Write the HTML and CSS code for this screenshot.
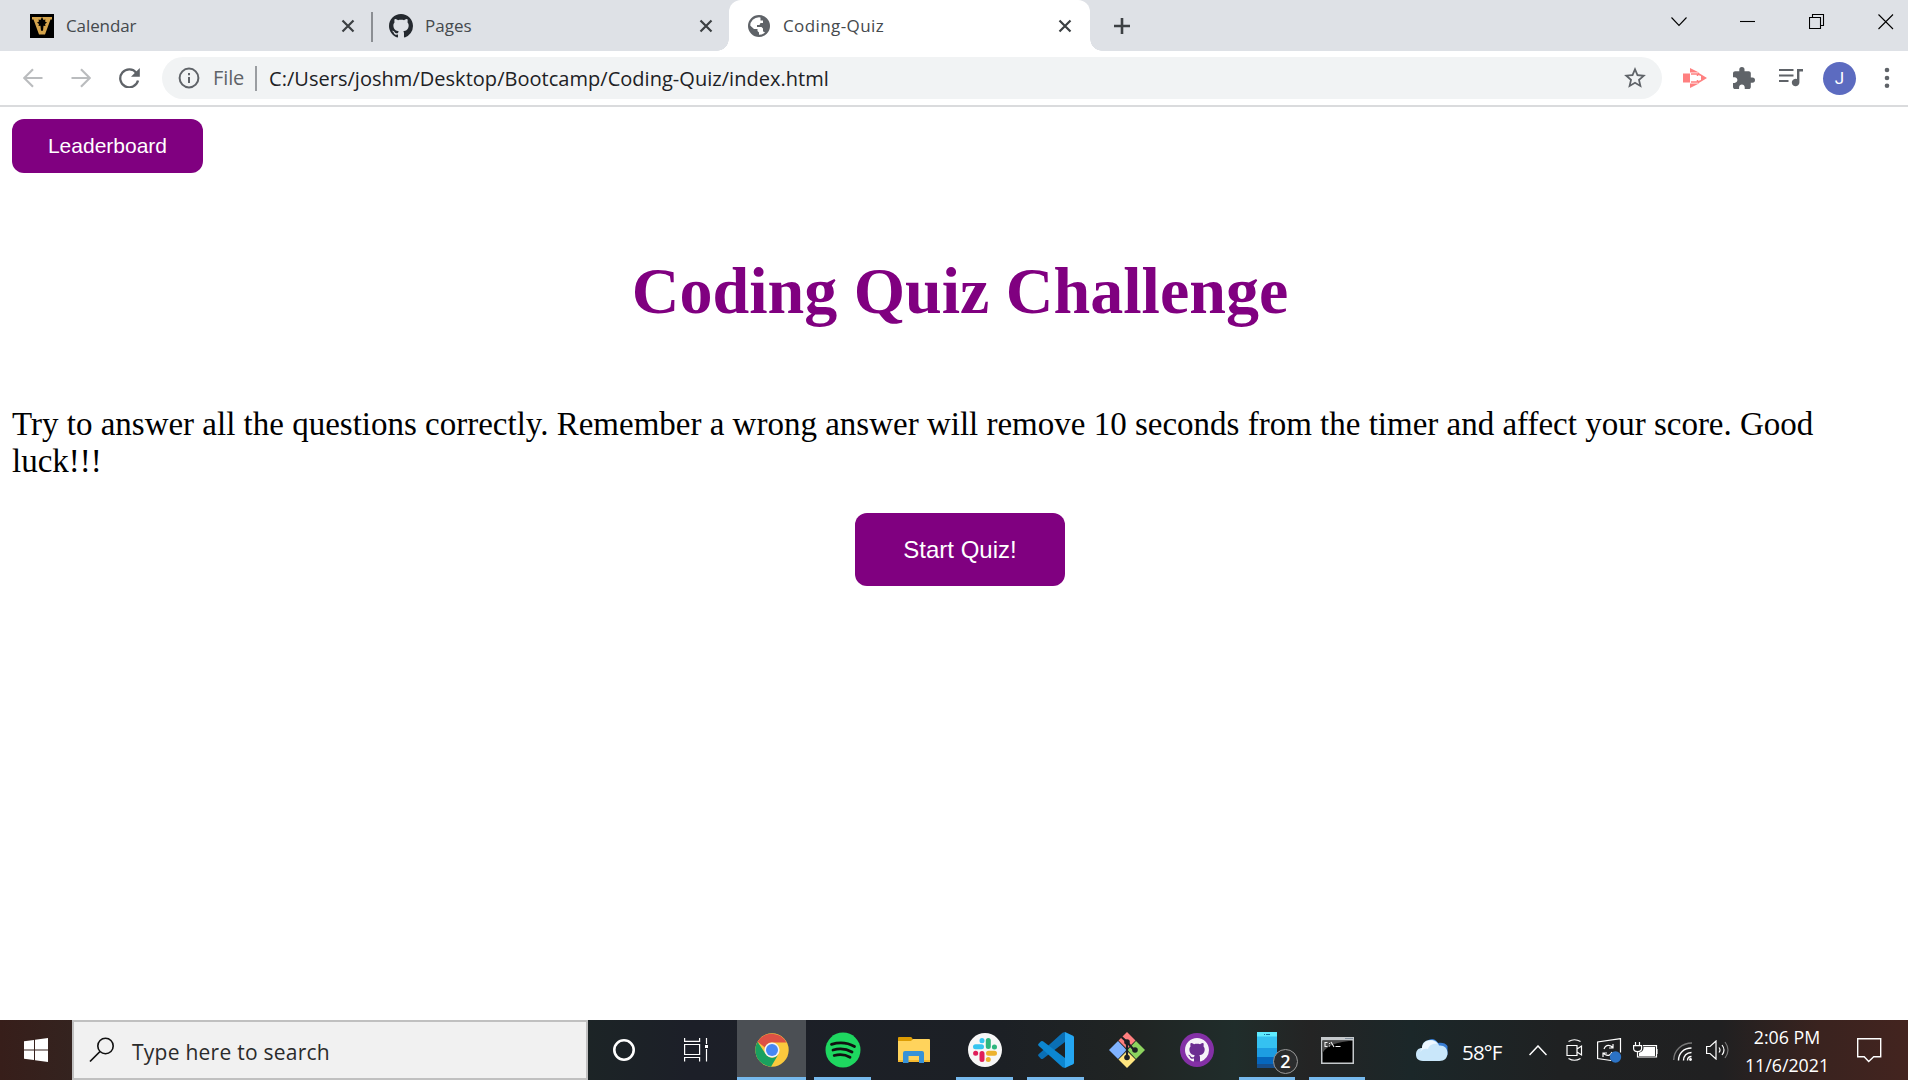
FILE: index.html
```html
<!DOCTYPE html>
<html lang="en">
<head>
<meta charset="utf-8">
<title>Coding-Quiz</title>
<link rel="stylesheet" href="styles.css">
</head>
<body>
<div class="screen">
  <header class="tabs">
    <div class="tab tab-first">
      <svg class="fav" width="24" height="24" viewBox="0 0 24 24"><path fill="#000" d="M0 0h24v24H0z"/><path fill="#d5a44c" d="M2 3h20v2.500h-1.500L15 20.500H9L3.500 5.500H2z"/><path fill="#000" d="M12 3l1.500 3 2-.5-.5 2 2 1-2 1.500.5 2-2-.3-.5 5h-2l-.5-5-2 .3.500-2-2-1.500 2-1-.5-2 2 .5z"/></svg>
      <span class="tab-title calendar">Calendar</span>
      <svg class="close" width="14" height="14" viewBox="0 0 14 14"><path d="M1.500 1.500l11 11M12.500 1.500l-11 11"/></svg>
    </div>
    <div class="tab tab-second">
      <svg class="fav" width="24" height="24" viewBox="0 0 16 16"><path fill="#24292f" d="M8 0C3.580 0 0 3.580 0 8c0 3.540 2.290 6.530 5.470 7.590.4.070.55-.17.55-.38 0-.19-.01-.82-.01-1.490-2.010.37-2.530-.49-2.690-.94-.09-.23-.48-.94-.82-1.130-.28-.15-.68-.52-.01-.53.63-.01 1.080.58 1.230.82.72 1.210 1.870.87 2.330.66.070-.52.280-.87.510-1.070-1.780-.2-3.640-.89-3.640-3.950 0-.87.310-1.590.82-2.150-.08-.2-.36-1.020.080-2.120 0 0 .67-.21 2.200.82.640-.18 1.320-.27 2-.27s1.360.090 2 .27c1.530-1.040 2.200-.82 2.200-.82.440 1.100.160 1.920.080 2.120.510.560.82 1.270.82 2.150 0 3.070-1.870 3.750-3.650 3.950.290.250.540.730.540 1.480 0 1.070-.01 1.930-.01 2.200 0 .210.150.460.550.380A8.010 8.010 0 0 0 16 8c0-4.420-3.580-8-8-8z"/></svg>
      <span class="tab-title pages">Pages</span>
      <svg class="close" width="14" height="14" viewBox="0 0 14 14"><path d="M1.500 1.500l11 11M12.500 1.500l-11 11"/></svg>
    </div>
    <div class="tab tab-active">
      <svg class="fav" width="22" height="22" viewBox="0 0 22 22"><circle cx="11" cy="11" r="9.900" fill="#fff" stroke="#5f6368" stroke-width="2.200"/><path fill="#5f6368" d="M12.500 1c5 1 8.500 5 8.500 10 0 3-1.500 6-3.500 7.500-.5-1-1-2-2.500-2v-3l-1.500-1.500H9V10h2.500l1-2H15V5.500h-2.500zM1 9.500l5 4.500h3.500v2l1.500 1.500V21C5 21 .5 16 1 9.500z"/></svg>
      <span class="tab-title quiz">Coding-Quiz</span>
      <svg class="close" width="14" height="14" viewBox="0 0 14 14"><path d="M1.500 1.500l11 11M12.500 1.500l-11 11"/></svg>
    </div>
    <svg class="plus" width="18" height="18" viewBox="0 0 18 18"><path d="M9 1v16M1 9h16"/></svg>
    <div class="window-controls">
      <svg width="16" height="16" viewBox="0 0 16 16"><path d="M.5 3.500L8 11.500l7.500-8"/></svg>
      <svg width="16" height="16" viewBox="0 0 16 16"><path d="M0 7.500h15"/></svg>
      <svg width="16" height="16" viewBox="0 0 16 16"><path d="M.5 3.500h11v11H.5zM3.500 3.500v-3h11v11h-3"/></svg>
      <svg width="16" height="16" viewBox="0 0 16 16"><path d="M.5.5l14.500 14.500M15 .5L.5 15"/></svg>
    </div>
  </header>

  <nav class="toolbar">
    <svg class="arrow back" width="20" height="20" viewBox="0 0 20 20"><path d="M19.500 10H1.500M10 1.200L1.200 10l8.800 8.800"/></svg>
    <svg class="arrow forward" width="20" height="20" viewBox="0 0 20 20"><path d="M.5 10h18M10 1.200l8.800 8.800-8.800 8.800"/></svg>
    <svg class="reload" width="21" height="20" viewBox="0 0 21 20"><path d="M17.500 5A9 9 0 1 0 19 12.500" fill="none" stroke="#5f6368" stroke-width="2.300"/><path d="M20.800 0v8.800H12z" fill="#5f6368"/></svg>
    <div class="omnibox">
      <svg class="info" width="22" height="22" viewBox="0 0 22 22"><circle cx="11" cy="11" r="9.400" fill="none" stroke="#5f6368" stroke-width="2"/><path d="M10 10h2v6h-2zM10 6h2v2.200h-2z" fill="#5f6368"/></svg>
      <span class="scheme">File</span>
      <span class="url">C:/Users/joshm/Desktop/Bootcamp/Coding-Quiz/index.html</span>
      <svg class="star" width="24" height="24" viewBox="1 1 22 22"><path fill="#5f6368" d="M22 9.240l-7.190-.62L12 2 9.190 8.630 2 9.240l5.460 4.730L5.820 21 12 17.270 18.180 21l-1.630-7.030L22 9.240zM12 15.400l-3.760 2.270 1-4.280-3.320-2.880 4.380-.38L12 6.100l1.710 4.040 4.380.38-3.320 2.880 1 4.280L12 15.400z"/></svg>
    </div>
    <svg class="recorder" width="24" height="20" viewBox="0 0 24 20"><path fill="#ff8080" d="M0 5.500h7v9H0zM7 0l9 4.500H7zM7 20l9-4.500H7zM15 4.500l9 5.500-9 5.500v-2.500l3-1v-4l-3-1z"/><path d="M8 6h6.500v2M8 14h6.500v-2" fill="none" stroke="#ff8080" stroke-width="1.500"/></svg>
    <svg class="puzzle" width="22" height="22" viewBox="2 1 21 21"><path fill="#5f6368" d="M20.500 11H19V7c0-1.100-.9-2-2-2h-4V3.500a2.500 2.500 0 0 0-5 0V5H4c-1.100 0-1.990.9-1.990 2v3.800H3.500c1.490 0 2.700 1.210 2.700 2.700s-1.210 2.700-2.700 2.700H2V20c0 1.100.9 2 2 2h3.800v-1.500c0-1.490 1.210-2.700 2.700-2.700s2.700 1.210 2.700 2.700V22H17c1.100 0 2-.9 2-2v-4h1.500a2.500 2.500 0 0 0 0-5z"/></svg>
    <svg class="playlist" width="25" height="20" viewBox="0 0 25 20"><path fill="none" stroke="#5f6368" stroke-width="2.200" d="M0 2h14.500M0 7.500h14.500M0 13h9.500"/><path fill="#5f6368" d="M18 1h6v2.400h-3.600v11.100a3.800 3.800 0 1 1-2.400-3.500z"/></svg>
    <span class="avatar">J</span>
    <svg class="dots" width="6" height="22" viewBox="0 0 6 22"><g fill="#5f6368"><circle cx="3" cy="3" r="2.300"/><circle cx="3" cy="11" r="2.300"/><circle cx="3" cy="18.700" r="2.300"/></g></svg>
  </nav>

  <main class="page">
    <button class="btn leaderboard">Leaderboard</button>
    <h1 class="heading">Coding Quiz Challenge</h1>
    <p class="intro">Try to answer all the questions correctly. Remember a wrong answer will remove 10 seconds from the timer and affect your score. Good luck!!!</p>
    <button class="btn start">Start Quiz!</button>
  </main>

  <footer class="taskbar">
    <div class="win">
      <svg width="24" height="24" viewBox="0 0 24 24"><path fill="#fff" d="M0 3.300L10 2v9.500H0zM11 1.800L24 0v11.500H11zM0 12.500h10V22L0 20.700zM11 12.500h13V24l-13-1.800z"/></svg>
    </div>
    <div class="search">
      <svg width="26" height="26" viewBox="0 0 26 26"><circle cx="16.500" cy="9" r="7.700" fill="none" stroke="#111" stroke-width="1.600"/><path d="M11 14.500L1 24.500" stroke="#111" stroke-width="1.700"/></svg>
      <span>Type here to search</span>
    </div>
    <div class="apps">
      <div class="app"><svg width="24" height="24" viewBox="0 0 24 24"><circle cx="12" cy="12" r="9.700" fill="none" stroke="#fff" stroke-width="2.600"/></svg></div>
      <div class="app"><svg width="24" height="24" viewBox="0 0 24 24"><path fill="none" stroke="#fff" stroke-width="1.200" d="M.6 0v3.400h15V0M.6 6.500h15v10H.6zM.6 23.500v-4h15v4M22.500 0v6M22.500 11v12.500"/><path fill="#fff" d="M21 7h3v3h-3z"/></svg></div>
      <div class="app open current"><svg width="34" height="34" viewBox="0 0 34 34"><circle cx="17" cy="17" r="16.700" fill="#fbc93d"/><path fill="#dd5144" d="M2.500 8.700A16.700 16.700 0 0 1 31.500 9.500H17a7.500 7.500 0 0 0-7 5z"/><path fill="#1aa15f" d="M2.500 8.700A16.700 16.700 0 0 0 16 33.700l7.300-12.300A7.500 7.500 0 0 1 10.500 20.700z"/><circle cx="17" cy="17" r="7.600" fill="#f4f4f4"/><circle cx="17" cy="17" r="6" fill="#4687f4"/></svg></div>
      <div class="app open"><svg width="36" height="36" viewBox="0 0 36 36"><circle cx="18" cy="18" r="17.500" fill="#1ed760"/><path d="M6.500 12.300c8-2.300 16.500-1.500 23 2.200M8 18c6.800-2 13.500-1.200 19 2M9.200 23.500c5.700-1.500 11-1 15.800 1.700" fill="none" stroke="#111" stroke-linecap="round" stroke-width="2.800"/></svg></div>
      <div class="app"><svg width="32" height="28" viewBox="0 0 32 28"><path fill="#dd9c03" d="M0 2q0-1 1-1h12q1 0 2 3v3H0z"/><path fill="#ffd35c" d="M0 5h13l2-2h16q1 0 1 1v22H0z"/><path fill="#f5b92f" d="M0 24h32v2H0z"/><path fill="#3792d8" d="M5 27V17q0-2 2-2h17q2 0 2 2v10h-5v-7H10.500v7z"/></svg></div>
      <div class="app open"><svg width="34" height="34" viewBox="0 0 34 34"><circle cx="17" cy="17" r="17" fill="#f7f7f7"/><g fill="none" stroke-width="5" stroke-linecap="round"><path stroke="#36c5f0" d="M7.500 13.700h6M14 7.600v.1"/><path stroke="#2eb67d" d="M20.300 7.500v6M26.500 14h-.1"/><path stroke="#ecb22e" d="M20.500 20.300h6M20.300 26.500v-.1"/><path stroke="#e01e5a" d="M14 20.500v6M7.600 20.300h.1"/></g></svg></div>
      <div class="app open"><svg width="36" height="36" viewBox="0 0 36 36"><path fill="#0a6fb5" d="M.6 24.300q-1-1 0-2L24.500.8 27 0v10L5 26.700q-1.300.8-2.300-.2z"/><path fill="#0c86d0" d="M.6 11.700q-1 1 0 2L24.500 35.200 27 36V26L5 9.300q-1.300-.8-2.300.2z"/><path fill="#24a6f2" d="M27 0l8 3.700q1 .5 1 1.600v25.400q0 1.100-1 1.600L27 36z"/></svg></div>
      <div class="app"><svg width="36" height="36" viewBox="0 0 36 36"><path fill="#ff7f7f" d="M18 0l8.500 8.500L18 17 9.500 8.500z"/><path fill="#80b3ff" d="M9 9l8.500 9L9 27l-9-9z"/><path fill="#8dd35f" d="M27 9l9 9-9 9-8.500-9z"/><path fill="#ffe680" d="M18 19l8.500 8.500L18 36l-8.500-8.500z"/><path d="M12.500 5l5.500 5v15M18 10l7 8" stroke="#1c1f24" stroke-width="2.200" fill="none"/><g fill="#1c1f24"><circle cx="18" cy="10" r="2.800"/><circle cx="26" cy="18" r="2.800"/><circle cx="18" cy="25.500" r="2.800"/></g></svg></div>
      <div class="app"><svg width="34" height="34" viewBox="0 0 34 34"><circle cx="17" cy="17" r="17" fill="#8430a6"/><circle cx="17" cy="17" r="11.500" fill="#6b2c91"/><path transform="translate(5 5) scale(1.500)" fill="#f6f2f8" d="M8 0C3.580 0 0 3.580 0 8c0 3.540 2.290 6.530 5.470 7.590.4.070.55-.17.55-.38 0-.19-.01-.82-.01-1.490-2.010.37-2.530-.49-2.690-.94-.09-.23-.48-.94-.82-1.130-.28-.15-.68-.52-.01-.53.63-.01 1.080.58 1.230.82.72 1.210 1.870.87 2.330.66.070-.52.280-.87.510-1.070-1.780-.2-3.640-.89-3.640-3.950 0-.87.310-1.590.82-2.150-.08-.2-.36-1.020.080-2.120 0 0 .67-.21 2.200.82.640-.18 1.320-.27 2-.27s1.360.090 2 .27c1.530-1.040 2.200-.82 2.200-.82.440 1.100.160 1.920.080 2.120.510.560.82 1.270.82 2.150 0 3.070-1.870 3.750-3.650 3.950.290.250.540.730.540 1.480 0 1.070-.01 1.930-.01 2.200 0 .210.150.460.550.380A8.010 8.010 0 0 0 16 8c0-4.420-3.580-8-8-8z"/></svg></div>
      <div class="app open phone"><svg width="20" height="36" viewBox="0 0 20 36"><path fill="#35c1f1" d="M0 0h20v36H0z"/><path fill="#5eebff" d="M0 0h20v4.500H0z"/><path fill="#1d9de2" d="M0 16h20v9H0z"/><path fill="#0667bd" d="M0 25h20v7H0z"/><path fill="#174f8c" d="M0 32h20v4H0z"/><path stroke="#1670a0" d="M7 2.500h1M9 2.500h4"/></svg><span class="badge">2</span></div>
      <div class="app open"><svg class="terminal" width="33" height="27" viewBox="0 0 33 27"><path fill="#c5c9cc" d="M0 0h33v27H0z"/><path fill="#83919e" d="M24 1h8v1h-8z"/><path fill="#000" d="M1.500 3.500h30v22h-30z"/><path fill="#4b4b4b" d="M1.500 3.500h30C17 5 6 8 1.500 16z"/><path fill="none" stroke="#eee" stroke-width="1.100" d="M6.500 5.500H4v4h2.500M8.500 6v1M8.500 8.500v1M10 5l3 5M14.500 9.500h5"/></svg></div>
    </div>
    <div class="tray">
      <svg class="cloud" width="32" height="22" viewBox="0 0 32 22"><path fill="#387ed5" d="M10 3C14-1 19-1 22 4c3-1 8 0 9.500 3v9L22 18z"/><path fill="#c9e7fa" d="M7 22C1 22 0 18 0 15.500 0 11 3 9 6 9 6 4 9 1 14.500 1 19 1 22 3 23 6.500c5-.5 8.500 2.500 8.500 7.500s-3 8-8 8z"/><path fill="#eef8ff" d="M6 9C7 4 10 1.500 14.500 1.500 18 1.500 20 3 21 5c-5-1-8 2-9 5-3-1-6 0-8 3z"/></svg>
      <span class="temp">58°F</span>
      <svg class="up" width="18" height="11" viewBox="0 0 18 11"><path d="M.5 10L9 1l8.500 9"/></svg>
      <svg class="meet" width="17" height="24" viewBox="0 0 17 24"><path d="M1 7.500h10v10H1zM11 11l4.500-3v9L11 14M2.500 3.500q6-3.500 12 0M2.500 20.500q6 3.500 12 0"/></svg>
      <svg class="sync" width="25" height="25" viewBox="0 0 25 25"><path d="M14 22.500L.6 20.500V4L23.500.6v14M7 11q2-5 7-3l2 2M16 6v4h-4M15 14q-2 5-7 2.500L6 15M6 19v-4h4"/><circle cx="18.500" cy="19" r="5.700" fill="#2b72c4" stroke="none"/></svg>
      <svg class="battery" width="25" height="18" viewBox="0 0 25 18"><path d="M2.500 1v3M6.500 1v3M.6 4.600h8v3q0 3-4 3t-4-3zM4.500 11v5h19V4.600H10M24 8v5"/><path fill="#fff" stroke="none" d="M10.500 6H22v9H6v-3.300q4.500-1 4.500-5z"/></svg>
      <svg class="wifi" width="20" height="20" viewBox="0 0 20 20"><path stroke="#777" d="M.7 18C1 8 9 1 19 1"/><path d="M5.500 18.500C5.500 11 11 6 18.500 6M10.500 18.500c0-4.500 3-8 8-8M14.500 18.500q0-4 4-4"/><circle cx="17.500" cy="17.500" r="1.400" fill="#fff" stroke="none"/></svg>
      <svg class="volume" width="23" height="20" viewBox="0 0 23 20"><path d="M.6 6.500H4L10 1v18l-6-5.500H.6zM13 7.500q2 2.500 0 5M16 5q4 5 0 10"/><path stroke="#777" d="M19 2q6 8 0 16"/></svg>
      <div class="clock"><span class="time">2:06 PM</span><span class="date">11/6/2021</span></div>
      <svg class="notice" width="25" height="25" viewBox="0 0 25 25"><path d="M.7.7h23v18h-7l-5 4.800-4.500-4.800H.7z"/></svg>
    </div>
  </footer>
</div>
</body>
</html>
```

FILE: styles.css
```css
* { box-sizing: border-box; }
body { margin: 0; background: #fff; }
svg { display: block; flex: none; }
span { white-space: nowrap; }

.screen {
  width: 1908px;
  height: 1080px;
  display: flex;
  flex-direction: column;
  overflow: hidden;
  font-family: "Open Sans", "Noto Sans", sans-serif;
}

/* Tab strip */
.tabs { height: 51px; flex: none; display: flex; background: #dee1e6; }
.tab { display: flex; align-items: center; height: 51px; }
.tab-first { width: 373px; padding: 0 18px 0 30px; background: linear-gradient(#8b8e93, #8b8e93) right 12px / 2px 30px no-repeat; }
.tab-second { width: 356px; padding: 0 16px 0 16px; }
.tab-active {
  position: relative;
  width: 361px;
  padding: 0 18px 0 19px;
  background: #fff;
  border-radius: 12px 12px 0 0;
}
.tab-active::before, .tab-active::after {
  content: "";
  position: absolute;
  bottom: 0;
  width: 12px;
  height: 12px;
}
.tab-active::before { left: -12px; background: radial-gradient(circle at 0 0, transparent 11.5px, #fff 12px); }
.tab-active::after { right: -12px; background: radial-gradient(circle at 100% 0, transparent 11.5px, #fff 12px); }
.tab-title { flex: 1; margin-left: 12px; font-size: 17px; color: #45494d; }
.calendar { letter-spacing: -0.1px; }
.pages { letter-spacing: 0; }
.quiz { margin-left: 13px; letter-spacing: 0.4px; }
.close { fill: none; stroke: #3c4043; stroke-width: 2.2; }
.plus { margin: 17px 0 0 23px; fill: none; stroke: #3c4043; stroke-width: 2.6; }
.window-controls { display: flex; gap: 53px; margin: 14px 14px 0 auto; fill: none; stroke: #000; stroke-width: 1.1; }

/* Toolbar */
.toolbar {
  height: 56px;
  flex: none;
  display: flex;
  align-items: center;
  padding-left: 23px;
  border-bottom: 2px solid #dadbdd;
}
.arrow { fill: none; stroke: #babcbe; stroke-width: 2.2; }
.forward { margin-left: 28px; }
.reload { margin-left: 28px; }
.omnibox {
  width: 1500px;
  height: 42px;
  margin-left: 22px;
  padding: 0 15px 0 16px;
  display: flex;
  align-items: center;
  border-radius: 21px;
  background: #f1f3f4;
  font-size: 20px;
}
.scheme { width: 44px; height: 25px; line-height: 24px; margin-left: 13px; border-right: 2px solid #9a9da1; color: #5f6368; letter-spacing: -0.1px; }
.url { flex: 1; margin-left: 12px; color: #202124; letter-spacing: 0.03px; }
.recorder { margin-left: 21px; }
.puzzle { margin-left: 26px; }
.playlist { margin-left: 24px; }
.avatar {
  width: 33px;
  height: 33px;
  flex: none;
  margin-left: 19px;
  border-radius: 50%;
  background: #5c6bc0;
  color: #fff;
  font: 17px/33px Roboto, sans-serif;
  text-align: center;
}
.dots { margin-left: 28px; }

/* Quiz page */
.page {
  flex: 1;
  display: flex;
  flex-direction: column;
  align-items: center;
  padding: 12px 0 0 12px;
  font-family: "Liberation Serif", "Times New Roman", serif;
}
.btn { border: 0; border-radius: 12px; background: #800080; color: #fff; font-family: "Liberation Sans", Arial, sans-serif; }
.leaderboard { align-self: flex-start; width: 191px; height: 54px; padding: 0; font-size: 21px; }
.heading { margin: 80px 0 0; font-size: 66px; line-height: 76px; font-weight: bold; color: #800080; }
.intro { align-self: stretch; margin: 77px 0 0; font-size: 33px; line-height: 37px; color: #000; }
.start { width: 210px; height: 73px; margin-top: 33px; padding: 0; font-size: 24px; }

/* Taskbar */
.taskbar {
  height: 60px;
  flex: none;
  display: flex;
  background: linear-gradient(90deg, #371e1a 0, #34231f 72px, #1c2426 588px, #1c1f28 690px, #1c2025 1000px, #202423 1130px, #202d2b 1235px, #242424 1310px, #1b2729 1410px, #1f2122 1560px, #202021 1720px, #3a231f 1820px, #43241f 1908px);
}
.win { width: 72px; display: flex; align-items: center; justify-content: center; }
.search {
  width: 516px;
  display: flex;
  align-items: center;
  padding-left: 15px;
  border: 2px solid #c0c0c0;
  background: #f1f1f1;
}
.search span { margin: 3px 0 0 17px; font-size: 21px; letter-spacing: 0.25px; color: #2b2b2b; }
.apps { width: 785px; display: grid; grid-template-columns: 72px 77px repeat(6, 71px) repeat(3, 70px); }
.app { position: relative; display: flex; align-items: center; justify-content: center; padding-right: 2px; }
.app:nth-child(1) { padding-right: 0; }
.app:nth-child(2) { padding-right: 5px; }
.open::after {
  content: "";
  position: absolute;
  left: 6px;
  right: 8px;
  bottom: 0;
  height: 3px;
  background: #76b9ed;
}
.current { background: linear-gradient(#4b4f54, #4b4f54) 0 0 / 69px 60px no-repeat; }
.current::after { left: 0; right: 2px; }
.badge {
  position: absolute;
  left: 40px;
  top: 29px;
  width: 25px;
  height: 25px;
  border: 1px solid #999;
  border-radius: 50%;
  background: #2b2d2e;
  color: #fff;
  font-size: 18px;
  font-weight: 600;
  line-height: 23px;
  text-align: center;
}
.tray { flex: 1; display: flex; align-items: center; padding-left: 43px; color: #fff; fill: none; stroke: #fff; stroke-width: 1.2; }
.cloud { stroke: none; }
.temp { width: 40px; margin: 3px 0 0 14px; font-size: 20.5px; letter-spacing: -0.8px; }
.up { margin-left: 27px; stroke-width: 1.5; }
.meet { margin-left: 19px; }
.sync { margin-left: 14px; }
.battery { margin-left: 11px; }
.wifi { margin: 4px 0 0 15px; stroke-width: 1.4; }
.volume { margin-left: 13px; }
.clock { width: 100px; height: 60px; margin-left: 8px; display: flex; flex-direction: column; align-items: center; padding-top: 3px; font-size: 17.8px; line-height: 28px; }
.notice { margin-left: 20px; stroke-width: 1.4; }
```
